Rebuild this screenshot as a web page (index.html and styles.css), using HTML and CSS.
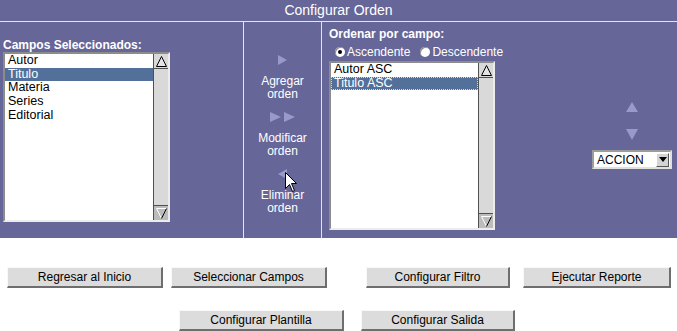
FILE: index.html
```html
<!DOCTYPE html>
<html lang="es">
<head>
    <meta charset="UTF-8">
    <title>Configurar Orden</title>
    <link rel="stylesheet" href="styles.css">
</head>
<body>
    <div class="title">Configurar Orden</div>

    <div class="panel">
        <!-- Campos seleccionados -->
        <div class="col col-fields">
            <div class="label">Campos Seleccionados:</div>
            <div class="listbox list-fields">
                <ul class="items">
                    <li>Autor</li>
                    <li class="selected">Titulo</li>
                    <li>Materia</li>
                    <li>Series</li>
                    <li>Editorial</li>
                </ul>
                <div class="scrollbar">
                    <div class="scroll-up">
                        <svg width="13" height="13" viewBox="0 0 13 13"><polygon points="6.5,1.5 11.5,11.5 1.5,11.5" fill="#e4e4e4" stroke="#000" stroke-width="1"/></svg>
                    </div>
                    <div class="scroll-track"></div>
                    <div class="scroll-down">
                        <svg width="13" height="13" viewBox="0 0 13 13"><polyline points="1.5,1.5 6.5,11.5" fill="none" stroke="#fff"/><polyline points="1.5,1.5 11.5,1.5" fill="none" stroke="#fff"/><polyline points="11.5,1.5 6.5,11.5" fill="none" stroke="#000"/></svg>
                    </div>
                </div>
            </div>
        </div>

        <!-- Acciones -->
        <div class="col col-actions">
            <div class="action">
                <svg width="11" height="10" viewBox="0 0 11 10"><polygon points="1,0 10,5 1,10" fill="#9999cc"/></svg>
                <div class="action-text">Agregar<br>orden</div>
            </div>
            <div class="action">
                <svg width="26" height="10" viewBox="0 0 26 10"><polygon points="0,0 11,5 0,10" fill="#9999cc"/><polygon points="14,0 25,5 14,10" fill="#9999cc"/></svg>
                <div class="action-text">Modificar<br>orden</div>
            </div>
            <div class="action">
                <svg width="11" height="10" viewBox="0 0 11 10"><polygon points="10,0 1,5 10,10" fill="#9999cc"/></svg>
                <div class="action-text">Eliminar<br>orden</div>
            </div>
        </div>

        <!-- Ordenar por campo -->
        <div class="col col-order">
            <div class="order-list">
                <div class="label">Ordenar por campo:</div>
                <div class="radios">
                    <span class="radio"><span class="radio-dot checked"></span>Ascendente</span>
                    <span class="radio"><span class="radio-dot"></span>Descendente</span>
                </div>
                <div class="listbox list-order">
                    <ul class="items">
                        <li>Autor ASC</li>
                        <li class="selected">Titulo ASC</li>
                    </ul>
                    <div class="scrollbar">
                        <div class="scroll-up">
                            <svg width="13" height="13" viewBox="0 0 13 13"><polygon points="6.5,1.5 11.5,11.5 1.5,11.5" fill="#e4e4e4" stroke="#000" stroke-width="1"/></svg>
                        </div>
                        <div class="scroll-track"></div>
                        <div class="scroll-down">
                            <svg width="13" height="13" viewBox="0 0 13 13"><polyline points="1.5,1.5 6.5,11.5" fill="none" stroke="#fff"/><polyline points="1.5,1.5 11.5,1.5" fill="none" stroke="#fff"/><polyline points="11.5,1.5 6.5,11.5" fill="none" stroke="#000"/></svg>
                        </div>
                    </div>
                </div>
            </div>

            <div class="order-controls">
                <svg class="move-up" width="12" height="10" viewBox="0 0 12 10"><polygon points="6,0 12,10 0,10" fill="#9999cc"/></svg>
                <svg class="move-down" width="12" height="11" viewBox="0 0 12 11"><polygon points="0,0 12,0 6,11" fill="#9999cc"/></svg>
                <div class="select">
                    <span>ACCION</span>
                    <span class="select-button">
                        <svg width="8" height="5" viewBox="0 0 8 5"><polygon points="0,0 8,0 4,5" fill="#000"/></svg>
                    </span>
                </div>
            </div>
        </div>
    </div>

    <div class="buttons">
        <div class="button-row row-1">
            <button class="btn btn-home">Regresar al Inicio</button>
            <button class="btn btn-fields">Seleccionar Campos</button>
            <button class="btn btn-filter">Configurar Filtro</button>
            <button class="btn btn-run">Ejecutar Reporte</button>
        </div>
        <div class="button-row row-2">
            <button class="btn btn-template">Configurar Plantilla</button>
            <button class="btn btn-output">Configurar Salida</button>
        </div>
    </div>

    <svg class="cursor" width="13" height="21" viewBox="0 0 13 21"><path d="M0.5,0.5 L0.5,16.5 L4.5,12.5 L7.5,19.5 L9.5,18.5 L6.5,11.5 L11.5,11.5 Z" fill="#fff" stroke="#000" stroke-width="1"/></svg>
</body>
</html>
```

FILE: styles.css
```css
body {
    margin: 0;
    font-family: "Liberation Sans", Arial, sans-serif;
    font-size: 12px;
    background-color: #fff;
    position: relative;
}

.title {
    height: 21px;
    line-height: 21px;
    background-color: #666699;
    color: #fff;
    font-size: 14px;
    text-align: center;
}

.panel {
    display: flex;
    gap: 1px;
    height: 217px;
    box-sizing: border-box;
    border-top: 1px solid #e4e4ec;
    background-color: #e4e4ec;
}

.col {
    background-color: #666699;
    display: flex;
    flex-direction: column;
    justify-content: center;
    box-sizing: border-box;
}

.col-fields {
    width: 243px;
    padding-left: 3px;
}

.col-actions {
    width: 77px;
    align-items: center;
    padding-top: 10px;
}

.col-order {
    flex: 1;
    flex-direction: row;
    align-items: center;
    padding-left: 7px;
}

.label {
    font-weight: bold;
    color: #fff;
    line-height: 14px;
}

/* list boxes */
.listbox {
    display: flex;
    background-color: #fff;
    border: 2px solid;
    border-color: #8c8c8c #ececec #ececec #8c8c8c;
    box-sizing: border-box;
}

.list-fields {
    width: 167px;
    height: 170px;
}

.list-order {
    width: 166px;
    height: 169px;
}

.items {
    list-style: none;
    margin: 0;
    padding: 0;
    flex: 1;
}

.items li {
    height: 13.7px;
    line-height: 13.7px;
    padding-left: 3px;
    color: #000;
    font-size: 12.5px;
    white-space: nowrap;
}

.items li.selected {
    background-color: #52709a;
    color: #fff;
}

.list-order .items li.selected {
    outline: 1px dotted #d8d8d8;
    outline-offset: -1px;
}

.scrollbar {
    width: 15px;
    display: flex;
    flex-direction: column;
    background-color: #d9d9d9;
    border-left: 1px solid #505050;
    box-sizing: border-box;
}

.scroll-up,
.scroll-down {
    height: 14px;
    display: flex;
    justify-content: center;
    align-items: center;
}

.scroll-up {
    border-bottom: 1px solid #505050;
}

.scroll-track {
    flex: 1;
}

.scroll-down {
    background-color: #bcbcbc;
    border-top: 1px solid #505050;
}

/* middle actions */
.action {
    display: flex;
    flex-direction: column;
    align-items: center;
    margin-bottom: 11px;
}

.action:last-child {
    margin-bottom: 0;
}

.action svg {
    display: block;
}

.action-text {
    margin-top: 10px;
    color: #fff;
    line-height: 13px;
    text-align: center;
}

/* order column */
.order-list {
    display: flex;
    flex-direction: column;
    padding-bottom: 3px;
}

.order-list .label {
    margin-bottom: 4px;
}

.radios {
    display: flex;
    align-items: center;
    color: #fff;
    line-height: 14px;
    margin-bottom: 2px;
    padding-left: 6px;
}

.radio {
    display: inline-flex;
    align-items: center;
    margin-right: 10px;
}

.radio-dot {
    position: relative;
    width: 10px;
    height: 10px;
    border-radius: 50%;
    background-color: #fff;
    box-shadow: inset 1px 1px 0 #8c8c8c;
    margin-right: 2px;
}

.radio-dot.checked::after {
    content: "";
    position: absolute;
    left: 3px;
    top: 3px;
    width: 4px;
    height: 4px;
    border-radius: 50%;
    background-color: #000;
}

.order-controls {
    margin-left: auto;
    margin-right: 5px;
    width: 80px;
    display: flex;
    flex-direction: column;
    align-items: center;
    padding-top: 11px;
}

.move-up {
    display: block;
}

.move-down {
    display: block;
    margin-top: 17px;
}

.select {
    margin-top: 10px;
    width: 80px;
    height: 19px;
    box-sizing: border-box;
    border: 2px solid;
    border-color: #9c9c9c #e0e0e0 #e0e0e0 #9c9c9c;
    background-color: #fff;
    display: flex;
    align-items: center;
    justify-content: space-between;
    padding-left: 3px;
    color: #000;
}

.select-button {
    width: 13px;
    height: 14px;
    box-sizing: border-box;
    margin-right: 1px;
    background-color: #d4d4d4;
    border: 1px solid;
    border-color: #fff #555 #555 #fff;
    display: flex;
    justify-content: center;
    align-items: center;
}

/* bottom buttons */
.buttons {
    padding-top: 29px;
}

.button-row {
    display: flex;
}

.row-1 {
    padding-left: 7px;
}

.row-2 {
    padding-left: 179px;
    margin-top: 22px;
}

.btn {
    height: 21px;
    box-sizing: border-box;
    padding: 0;
    background-color: #dcdcdc;
    border-style: solid;
    border-width: 1px 2px 2px 1px;
    border-color: #f8f8f8 #6e6e6e #6e6e6e #f8f8f8;
    font-family: "Liberation Sans", Arial, sans-serif;
    font-size: 12px;
    color: #000;
}

.btn-home { width: 156px; }
.btn-fields { width: 156px; margin-left: 8px; }
.btn-filter { width: 144px; margin-left: 39px; }
.btn-run { width: 148px; margin-left: 13px; }
.btn-template { width: 165px; }
.btn-output { width: 154px; margin-left: 17px; }

.cursor {
    position: absolute;
    left: 285px;
    top: 172px;
}
```
